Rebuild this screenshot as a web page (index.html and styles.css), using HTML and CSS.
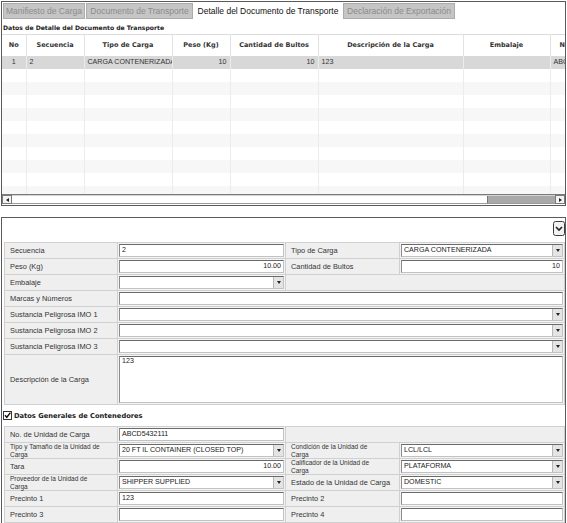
FILE: index.html
```html
<!DOCTYPE html>
<html lang="es">
<head>
<meta charset="utf-8">
<title>Detalle del Documento de Transporte</title>
<link rel="stylesheet" href="styles.css">
</head>
<body>
<div class="tabpanel">
  <div class="tabs">
    <div class="tab t1">Manifiesto de Carga</div>
    <div class="tab t2">Documento de Transporte</div>
    <div class="tab t3 active">Detalle del Documento de Transporte</div>
    <div class="tab t4">Declaración de Exportación</div>
  </div>
  <div class="subtitle">Datos de Detalle del Documento de Transporte</div>
  <div class="grid">
    <table class="data">
      <colgroup>
        <col class="c-no"><col class="c-sec"><col class="c-tipo"><col class="c-peso"><col class="c-cant"><col class="c-desc"><col class="c-emb"><col class="c-last">
      </colgroup>
      <thead>
        <tr><th>No</th><th>Secuencia</th><th>Tipo de Carga</th><th>Peso (Kg)</th><th>Cantidad de Bultos</th><th>Descripción de la Carga</th><th>Embalaje</th><th class="last">No. de Unidad de Carga</th></tr>
      </thead>
      <tbody>
        <tr class="selrow"><td class="center">1</td><td>2</td><td>CARGA CONTENERIZADA</td><td class="right">10</td><td class="right">10</td><td>123</td><td></td><td>ABCD5432111</td></tr>
        <tr><td></td><td></td><td></td><td></td><td></td><td></td><td></td><td></td></tr>
        <tr><td></td><td></td><td></td><td></td><td></td><td></td><td></td><td></td></tr>
        <tr><td></td><td></td><td></td><td></td><td></td><td></td><td></td><td></td></tr>
        <tr><td></td><td></td><td></td><td></td><td></td><td></td><td></td><td></td></tr>
        <tr><td></td><td></td><td></td><td></td><td></td><td></td><td></td><td></td></tr>
        <tr><td></td><td></td><td></td><td></td><td></td><td></td><td></td><td></td></tr>
        <tr><td></td><td></td><td></td><td></td><td></td><td></td><td></td><td></td></tr>
        <tr><td></td><td></td><td></td><td></td><td></td><td></td><td></td><td></td></tr>
        <tr><td></td><td></td><td></td><td></td><td></td><td></td><td></td><td></td></tr>
        <tr><td></td><td></td><td></td><td></td><td></td><td></td><td></td><td></td></tr>
      </tbody>
    </table>
  </div>
  <div class="hscroll">
    <div class="arrow arrow-left"></div>
    <div class="track"><div class="thumb"></div></div>
    <div class="arrow arrow-right"></div>
  </div>
</div>

<div class="detail">
  <div class="toolbar">
    <svg class="collapse" width="12" height="15" viewBox="0 0 12 15" aria-hidden="true">
      <rect x="0.5" y="0.5" width="11" height="14" rx="2" fill="#f2f2f2" stroke="#3c3c3c"/>
      <path d="M3 6 L6 9 L9 6" fill="none" stroke="#222" stroke-width="1.6"/>
    </svg>
  </div>

  <div class="form">
    <div class="lbl">Secuencia</div>
    <div class="val"><div class="field">2</div></div>
    <div class="lbl">Tipo de Carga</div>
    <div class="val"><div class="field select"><span class="txt">CARGA CONTENERIZADA</span><span class="btn"></span></div></div>

    <div class="lbl">Peso (Kg)</div>
    <div class="val"><div class="field num">10.00</div></div>
    <div class="lbl">Cantidad de Bultos</div>
    <div class="val"><div class="field num">10</div></div>

    <div class="lbl">Embalaje</div>
    <div class="val"><div class="field select"><span class="txt"></span><span class="btn"></span></div></div>
    <div class="val empty span2"></div>

    <div class="lbl">Marcas y Números</div>
    <div class="val span3"><div class="field"></div></div>

    <div class="lbl">Sustancia Peligrosa IMO 1</div>
    <div class="val span3"><div class="field select"><span class="txt"></span><span class="btn"></span></div></div>

    <div class="lbl">Sustancia Peligrosa IMO 2</div>
    <div class="val span3"><div class="field select"><span class="txt"></span><span class="btn"></span></div></div>

    <div class="lbl">Sustancia Peligrosa IMO 3</div>
    <div class="val span3"><div class="field select"><span class="txt"></span><span class="btn"></span></div></div>

    <div class="lbl">Descripción de la Carga</div>
    <div class="val span3"><div class="field area">123</div></div>
  </div>

  <div class="sect">
    <svg class="check" width="9" height="9" viewBox="0 0 9 9" aria-hidden="true">
      <rect x="0.5" y="0.5" width="8" height="8" fill="#fff" stroke="#333"/>
      <path d="M2 4.2 L3.8 6.3 L7.4 1.6" fill="none" stroke="#111" stroke-width="1.4"/>
    </svg>
    <span>Datos Generales de Contenedores</span>
  </div>

  <div class="form">
    <div class="lbl">No. de Unidad de Carga</div>
    <div class="val"><div class="field">ABCD5432111</div></div>
    <div class="val empty span2"></div>

    <div class="lbl two">Tipo y Tamaño de la Unidad de<br>Carga</div>
    <div class="val"><div class="field select"><span class="txt">20 FT IL CONTAINER (CLOSED TOP)</span><span class="btn"></span></div></div>
    <div class="lbl two">Condición de la Unidad de<br>Carga</div>
    <div class="val"><div class="field select"><span class="txt">LCL/LCL</span><span class="btn"></span></div></div>

    <div class="lbl">Tara</div>
    <div class="val"><div class="field num">10.00</div></div>
    <div class="lbl two">Calificador de la Unidad de<br>Carga</div>
    <div class="val"><div class="field select"><span class="txt">PLATAFORMA</span><span class="btn"></span></div></div>

    <div class="lbl two">Proveedor de la Unidad de<br>Carga</div>
    <div class="val"><div class="field select"><span class="txt">SHIPPER SUPPLIED</span><span class="btn"></span></div></div>
    <div class="lbl">Estado de la Unidad de Carga</div>
    <div class="val"><div class="field select"><span class="txt">DOMESTIC</span><span class="btn"></span></div></div>

    <div class="lbl">Precinto 1</div>
    <div class="val"><div class="field">123</div></div>
    <div class="lbl">Precinto 2</div>
    <div class="val"><div class="field"></div></div>

    <div class="lbl">Precinto 3</div>
    <div class="val"><div class="field"></div></div>
    <div class="lbl">Precinto 4</div>
    <div class="val"><div class="field"></div></div>
  </div>
</div>
</body>
</html>
```

FILE: styles.css
```css
* {
  box-sizing: border-box;
}

body {
  margin: 0;
  background: #ffffff;
  font-family: "Liberation Sans", Arial, sans-serif;
  color: #222;
}

/* ---------- top tab panel ---------- */
.tabpanel {
  margin: 1px 0 0 1px;
  width: 565px;
  height: 205px;
  border: 1px solid #5a5a5a;
  display: flex;
  flex-direction: column;
}

.tabs {
  display: flex;
  gap: 1px;
  padding: 1px 0 0 1px;
  height: 18px;
  flex: none;
}

.tab {
  height: 16px;
  border: 1px solid #acacac;
  background: #c5c5c5;
  color: #8c8c8c;
  font-size: 8.5px;
  line-height: 14px;
  text-align: center;
  white-space: nowrap;
  overflow: hidden;
}

.tab.active {
  background: #ffffff;
  border-color: #ffffff;
  color: #111;
}

.t1 { width: 82px; }
.t2 { width: 107px; }
.t3 { width: 148px; }
.t4 { width: 112px; }

.subtitle {
  flex: none;
  height: 14px;
  line-height: 15px;
  font-family: "DejaVu Sans", Verdana, sans-serif;
  font-size: 6.1px;
  font-weight: bold;
  padding-left: 1px;
  color: #222;
}

.grid {
  flex: none;
  height: 160px;
  overflow: hidden;
}

table.data {
  border-collapse: collapse;
  table-layout: fixed;
  width: 648px;
}

.c-no { width: 24px; }
.c-sec { width: 58px; }
.c-tipo { width: 88px; }
.c-peso { width: 58px; }
.c-cant { width: 88px; }
.c-desc { width: 145px; }
.c-emb { width: 87px; }
.c-last { width: 100px; }

table.data th {
  height: 21px;
  padding: 0 3px;
  font-family: "DejaVu Sans", Verdana, sans-serif;
  font-size: 6.5px;
  font-weight: bold;
  color: #333;
  text-align: center;
  border-top: 1px solid #dcdcdc;
  border-right: 1px solid #e2e2e2;
  background: #fff;
  white-space: nowrap;
  overflow: hidden;
}

table.data th.last {
  text-align: left;
  padding-left: 9px;
}

table.data td {
  height: 13px;
  padding: 0 3px;
  font-size: 7.1px;
  color: #333;
  border-right: 1px solid #ececec;
  white-space: nowrap;
  overflow: hidden;
}

table.data tbody tr:nth-child(odd) td {
  background: #f7f7f7;
}

table.data tbody tr.selrow td {
  background: #d8d8d8;
}

.center { text-align: center; }
.right { text-align: right; }

.hscroll {
  flex: none;
  height: 10px;
  display: flex;
  border-top: 1px solid #7a7a7a;
  background: #fff;
}

.arrow {
  width: 10px;
  height: 9px;
  border: 1px solid #7a7a7a;
  background: #f4f4f4;
  display: flex;
  align-items: center;
  justify-content: center;
}

.arrow-left::after {
  content: "";
  border-top: 2.5px solid transparent;
  border-bottom: 2.5px solid transparent;
  border-right: 3px solid #222;
}

.arrow-right::after {
  content: "";
  border-top: 2.5px solid transparent;
  border-bottom: 2.5px solid transparent;
  border-left: 3px solid #222;
}

.track {
  flex: 1;
  display: flex;
  justify-content: flex-end;
  border-top: 1px solid #d4d4d4;
  border-bottom: 1px solid #9a9a9a;
}

.thumb {
  width: 68px;
  background: #a9a9a9;
  border-left: 1px solid #777;
}

/* ---------- detail panel ---------- */
.detail {
  margin: 11px 0 0 1px;
  width: 565px;
  border: 1px solid #5a5a5a;
  padding: 0 0 1px 2px;
}

.toolbar {
  height: 24px;
  display: flex;
  justify-content: flex-end;
  align-items: flex-start;
  padding: 3px 0 0 0;
}

.collapse {
  display: block;
}

.form {
  display: grid;
  grid-template-columns: 112px 167px 113px 164px;
  grid-auto-rows: minmax(15px, auto);
  gap: 1px;
  background: #d0d0d0;
  border: 1px solid #d0d0d0;
  width: 561px;
}

.lbl {
  background: #efefef;
  padding-left: 5px;
  font-size: 7.4px;
  color: #333;
  display: flex;
  align-items: center;
  white-space: nowrap;
}

.lbl.two {
  font-size: 6.5px;
  line-height: 7.5px;
  white-space: normal;
}

.val {
  background: #f3f3f3;
  padding: 1px;
}

.val.empty {
  background: #efefef;
}

.span2 { grid-column: span 2; }
.span3 { grid-column: span 3; }

.field {
  height: 13px;
  background: #fff;
  border: 1px solid;
  border-color: #6a6a6a #c2c2c2 #c2c2c2 #8c8c8c;
  font-size: 7.1px;
  line-height: 11px;
  padding: 0 2px;
  color: #222;
  white-space: nowrap;
  overflow: hidden;
}

.field.num {
  text-align: right;
}

.field.select {
  display: flex;
  padding: 0 0 0 2px;
}

.field.select .txt {
  flex: 1;
  overflow: hidden;
}

.field.select .btn {
  width: 10px;
  flex: none;
  background: #e4e4e4;
  border-left: 1px solid #b8b8b8;
  display: flex;
  align-items: center;
  justify-content: center;
}

.field.select .btn::after {
  content: "";
  border-left: 2px solid transparent;
  border-right: 2px solid transparent;
  border-top: 3px solid #222;
}

.field.area {
  height: 47px;
  line-height: 8px;
}

.sect {
  height: 21px;
  display: flex;
  align-items: center;
  gap: 2px;
  margin-left: -1px;
  font-family: "DejaVu Sans", Verdana, sans-serif;
  font-size: 6.7px;
  font-weight: bold;
  color: #222;
}

.check {
  display: block;
  flex: none;
}
```
